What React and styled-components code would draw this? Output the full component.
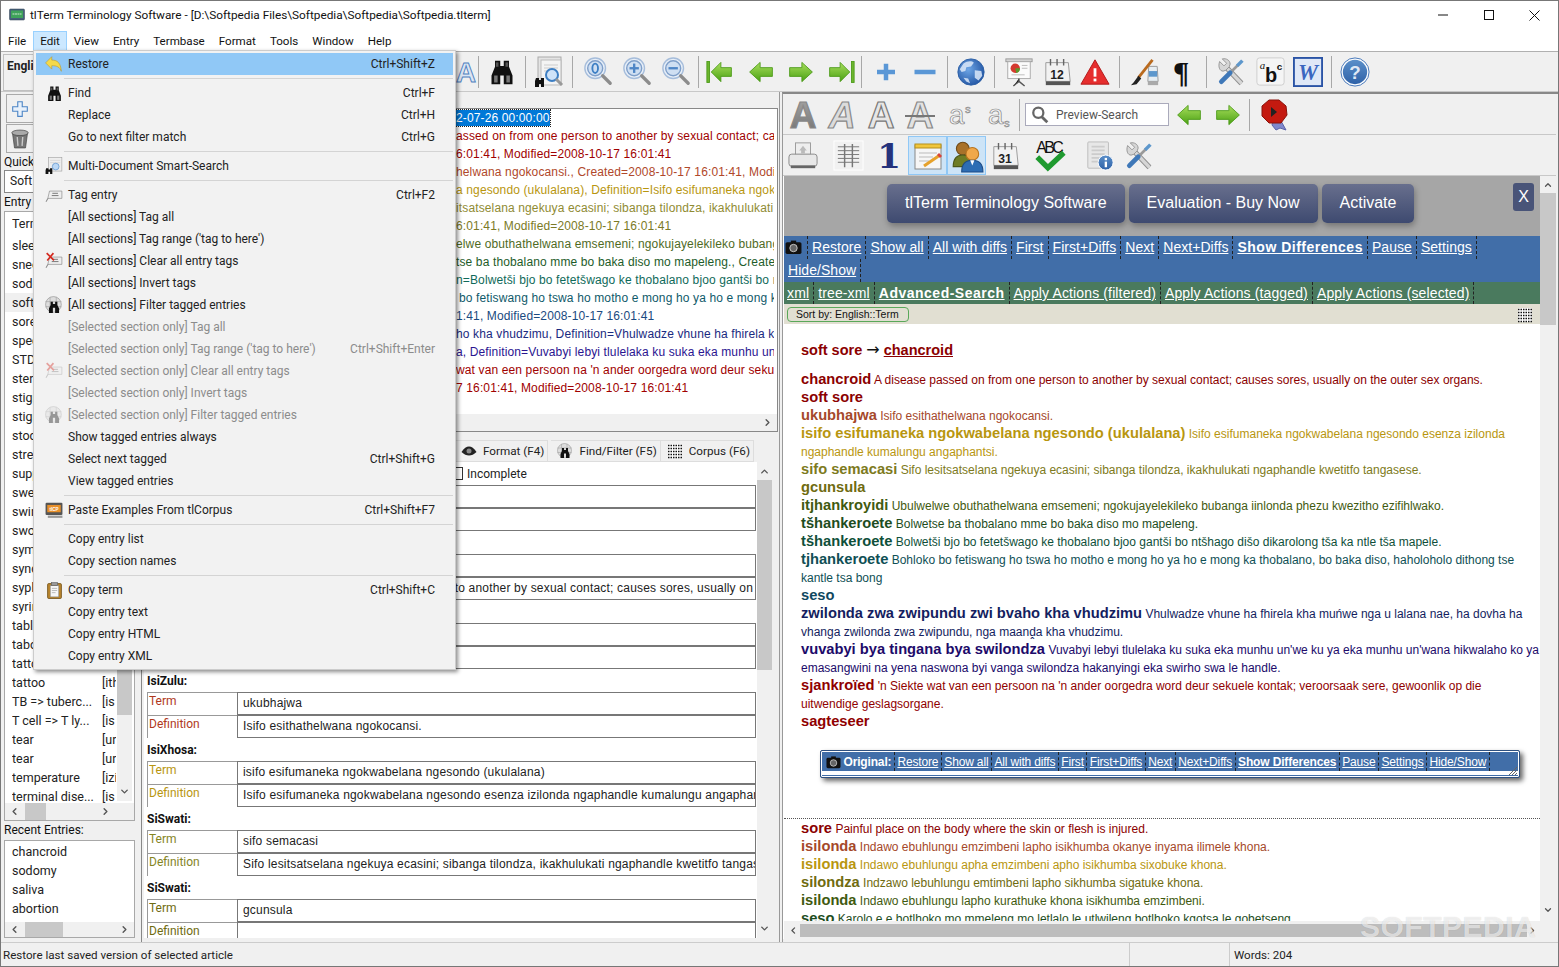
import React from "react";
import styled, { createGlobalStyle } from "styled-components";
import { ChevronUp, ChevronDown, ChevronLeft, ChevronRight } from "lucide-react";

const UI = `Roboto, "Noto Sans", sans-serif`;
const ARIAL = `"Liberation Sans", Arial, sans-serif`;

const Global = createGlobalStyle`
  html, body { margin: 0; padding: 0; overflow: hidden; background: #f0f0f0; }
  * { box-sizing: border-box; }
`;

/* ---------- icons ---------- */
const I = ({ s = 28, children }) => (
  <svg width={s} height={s} viewBox="0 0 32 32">{children}</svg>
);

const Defs = styled.svg`
  width: 0;
  height: 0;
  position: absolute;
`;

const Binoculars = ({ s = 28 }) => (
  <I s={s}>
    <path fill="#111" d="M8 3h6v6h4V3h6v7l4 10v10H18V20h-4v10H4V20l4-10z" />
    <rect x="7" y="20" width="4" height="8" fill="#777" />
    <rect x="21" y="20" width="4" height="8" fill="#777" />
    <rect x="9" y="5" width="3" height="5" fill="#555" />
    <rect x="20" y="5" width="3" height="5" fill="#555" />
  </I>
);
const DocSearch = ({ s = 32 }) => (
  <I s={s}>
    <rect x="5" y="1" width="23" height="27" fill="#e4e4e4" stroke="#aaa" />
    <rect x="8" y="4" width="20" height="25" fill="#f4f4f4" stroke="#bbb" />
    <path stroke="#ccc" d="M11 9h14M11 12h14M11 15h6" />
    <circle cx="19" cy="19" r="6" fill="#cfe3f8" stroke="#3d7fc4" strokeWidth="2" />
    <path stroke="#999" strokeWidth="3" d="M23 23l6 6" />
    <path fill="#111" d="M3 22h3v2h2v-2h3v9H8v-3H6v3H2v-6z" />
  </I>
);
const Zoom = ({ k }) => (
  <I s={30}>
    <circle cx="13" cy="12" r="11" fill="#e8eff8" stroke="#a6bddb" strokeWidth="1.5" />
    <circle cx="13" cy="12" r="8" fill="#cfdff2" stroke="#7f9fc9" strokeWidth="1.5" />
    {k === "0" && <ellipse cx="13" cy="12" rx="3" ry="5" fill="none" stroke="#3d7fc4" strokeWidth="2" />}
    {k !== "0" && <path stroke="#4f86c6" strokeWidth="2.5" d="M8 12h10" />}
    {k === "+" && <path stroke="#4f86c6" strokeWidth="2.5" d="M13 7v10" />}
    <path stroke="#8c8c8c" strokeWidth="3.5" strokeLinecap="round" d="M21 20l8 8" />
  </I>
);
const Arrow = ({ dir = "l", bar, s = 28 }) => (
  <I s={s}>
    <g transform={dir === "r" ? "translate(32 0) scale(-1 1)" : undefined}>
      <path fill="url(#gGreen)" stroke="#4b9a18" d={bar ? "M6 16 17 5v6h12v10H17v6z" : "M3 16 15 5v6h14v10H15v6z"} />
      {bar && <rect x="1" y="4" width="3" height="24" fill="#6cb52d" stroke="#4b9a18" />}
    </g>
  </I>
);
const Plus = ({ s = 24, c = "#5a97d6" }) => (
  <I s={s}>
    <path fill={c} d="M13 5h6v8h9v6h-9v8h-6v-8H4v-6h9z" />
  </I>
);
const PlusOutline = () => (
  <I s={18}>
    <path fill="#e8f1fb" stroke="#4f86c6" strokeWidth="2" d="M12 3h8v9h9v8h-9v9h-8v-9H3v-8h9z" />
  </I>
);
const Minus = () => (
  <I s={24}>
    <rect x="2" y="13" width="28" height="6" fill="#5a97d6" />
  </I>
);
const Globe = () => (
  <I s={30}>
    <circle cx="16" cy="16" r="14" fill="url(#gGlobe)" stroke="#2c5fa5" />
    <path fill="#dce9f9" opacity=".85" d="M8 7c4-3 9-3 11-1l-3 4-5 1-1 4-4 1-2-3zM20 14l7 1 1 5-4 5-4-3zM8 22l5 1 2 5-4-2z" />
  </I>
);
const Board = () => (
  <I s={30}>
    <rect x="2" y="2" width="28" height="3" fill="#d5d5d5" stroke="#999" />
    <rect x="4" y="5" width="24" height="18" fill="#fbfbfb" stroke="#aaa" />
    <circle cx="12" cy="12" r="5" fill="#d43a2f" />
    <path fill="#5a9a2c" d="M12 12h5a5 5 0 0 1-4 5z" />
    <path stroke="#bbb" d="M19 9h6M19 12h6M8 19h14" />
    <path stroke="#555" strokeWidth="1.5" d="M16 23v3l-6 5M16 26l6 5" />
  </I>
);
const Calendar = ({ n = "12" }) => (
  <I s={30}>
    <path fill="#f2f2f2" stroke="#999" d="M3 6h24l2 20H3z" />
    <rect x="3" y="26" width="26" height="4" fill="#555" />
    <path stroke="#666" strokeWidth="1.5" d="M8 2v7M15 2v7M22 2v7" />
    <text x="15" y="23" textAnchor="middle" fontFamily={ARIAL} fontWeight="700" fontSize="13" fill="#222">{n}</text>
  </I>
);
const Warning = () => (
  <I s={30}>
    <path fill="#e62e2e" stroke="#b01818" d="M16 3 31 29H1z" />
    <rect x="14.5" y="12" width="3" height="9" fill="#fff" />
    <rect x="14.5" y="23" width="3" height="3" fill="#fff" />
  </I>
);
const Brush = () => (
  <I s={30}>
    <path fill="#e6edf2" stroke="#999" d="M20 10h9l1 16h-11z" />
    <rect x="19" y="26" width="11" height="4" fill="#aaa" />
    <rect x="20" y="15" width="9" height="6" fill="#5d97cc" />
    <path stroke="#b96a1e" strokeWidth="3" d="M24 3 9 22" />
    <path fill="#222" d="M9 20l3 3-5 6-6 1 3-3z" />
  </I>
);
const Tools = ({ s = 28 }) => (
  <I s={s}>
    <path stroke="#8f8f8f" strokeWidth="6" d="M9 9l19 20" />
    <path stroke="#d6d6d6" strokeWidth="4" d="M9 9l19 20" />
    <path fill="#d6d6d6" stroke="#8f8f8f" d="M3 4l5 5 3-3-5-5c5-1 9 2 9 6l-1 3-4 4-3 1c-4 0-6-5-4-11z" />
    <path stroke="#9a9a9a" strokeWidth="3" d="M14 18l10-10" />
    <path stroke="#3f78b8" strokeWidth="5.5" strokeLinecap="round" d="M5 27l10-10" />
    <path stroke="#5d97cc" strokeWidth="4" d="M23 9l6-6" />
  </I>
);
const AbcTile = () => (
  <I s={29}>
    <rect x="1" y="1" width="30" height="30" rx="3" fill="#f5f5f5" stroke="#ccc" />
    <text x="4" y="13" fontFamily={`"Liberation Serif", serif`} fontStyle="italic" fontSize="12" fill="#111">a</text>
    <text x="10" y="28" fontFamily={ARIAL} fontWeight="700" fontSize="22" fill="#111">b</text>
    <text x="23" y="14" fontFamily={ARIAL} fontWeight="700" fontSize="11" fill="#111">c</text>
  </I>
);
const WordTile = () => (
  <I s={30}>
    <rect x="1" y="1" width="30" height="30" fill="#dfe8f7" stroke="#2a53a5" strokeWidth="2" />
    <text x="16" y="25" textAnchor="middle" fontFamily={`"Liberation Serif", serif`} fontWeight="700" fontStyle="italic" fontSize="24" fill="#3a66c0">W</text>
  </I>
);
const Help = () => (
  <I s={30}>
    <circle cx="16" cy="16" r="15" fill="#fff" stroke="#3d70b5" />
    <circle cx="16" cy="16" r="13" fill="url(#gBlue)" />
    <text x="16" y="23" textAnchor="middle" fontFamily={ARIAL} fontWeight="700" fontSize="20" fill="#dfe8f5">?</text>
  </I>
);
const letterLook = {
  bold: { fill: "url(#gGrey)", stroke: "#888" },
  italic: { fill: "#dcdcdc", stroke: "#888" },
  outline: { fill: "#e6e6e6", stroke: "#777" },
  strike: { fill: "#e2e2e2", stroke: "#888" },
  blue: { fill: "#dbe6f3", stroke: "#4f7fc0" },
};
const LetterA = ({ kind }) => (
  <I s={32}>
    <text
      x="16"
      y="29"
      textAnchor="middle"
      fontFamily={ARIAL}
      fontWeight="700"
      fontStyle={kind === "italic" ? "italic" : "normal"}
      fontSize="37"
      fill={letterLook[kind].fill}
      stroke={letterLook[kind].stroke}
      strokeWidth="1.2"
    >
      A
    </text>
    {kind === "strike" && <rect x="1" y="16" width="30" height="2" fill="#777" />}
  </I>
);
const SmallA = ({ up }) => (
  <I s={26}>
    <text x="13" y="27" textAnchor="middle" fontFamily={ARIAL} fontSize="34" fill="#f4f4f4" stroke="#888" strokeWidth=".9">a</text>
    <text x="27" y={up ? 13 : 31} textAnchor="middle" fontFamily={ARIAL} fontSize="14" fill="#f4f4f4" stroke="#888" strokeWidth=".7">s</text>
  </I>
);
const Printer = () => (
  <I s={30}>
    <rect x="8" y="2" width="16" height="13" fill="#eee" stroke="#999" />
    <path fill="#bbb" d="M12 10l4-5 4 5h-2v3h-4v-3z" />
    <rect x="1" y="14" width="30" height="13" rx="3" fill="#e8e8e8" stroke="#888" />
    <rect x="3" y="26" width="26" height="3" fill="#666" />
  </I>
);
const TableIcon = () => (
  <I s={31}>
    <rect x="1" y="1" width="30" height="30" fill="#f1f1f1" stroke="#fff" />
    <path stroke="#777" d="M5 7h22M5 11h22M5 15h22M5 19h22M5 23h22" />
    <path stroke="#777" strokeWidth="1.5" d="M12 4v24M20 4v24" />
  </I>
);
const Notepad = () => (
  <I s={32}>
    <rect x="3" y="5" width="26" height="24" fill="#f6f6f6" stroke="#888" />
    <rect x="3" y="4" width="26" height="4" fill="#f0c63c" stroke="#b58f1f" />
    <path stroke="#bbb" d="M7 13h18M7 17h14M7 21h10" />
    <path stroke="#e6a12a" strokeWidth="3" d="M12 26l16-11" />
    <path fill="#d8443a" d="M27 13l3 3-2 2-3-3z" />
  </I>
);
const People = () => (
  <I s={34}>
    <circle cx="12" cy="9" r="6" fill="#a8722a" stroke="#6e4a1a" />
    <path fill="#6f7d25" stroke="#4d5818" d="M3 26c0-8 4-11 9-11s9 3 9 11z" />
    <circle cx="21" cy="14" r="6" fill="#f0a84a" stroke="#b8741f" />
    <path fill="#2d6db4" stroke="#1d4b85" d="M11 31c0-8 4-11 10-11s10 3 10 11z" />
    <path fill="#fff" d="M19 20h4l-2 5z" />
  </I>
);
const AbcCheck = () => (
  <I s={34}>
    <text x="16" y="13" textAnchor="middle" fontFamily={ARIAL} fontSize="15" fill="#111" textLength="26">ABC</text>
    <path fill="none" stroke="#1f9a2f" strokeWidth="5" d="M4 17l10 10L29 13" />
  </I>
);
const DocInfo = () => (
  <I s={30}>
    <rect x="3" y="1" width="22" height="28" rx="1" fill="#e7e7e7" stroke="#bbb" />
    <path stroke="#ccc" strokeWidth="2" d="M7 6h14M7 10h14M7 14h14M7 18h8M7 22h8" />
    <circle cx="22" cy="23" r="8" fill="url(#gBlue)" stroke="#fff" />
    <rect x="21" y="22" width="2.5" height="6" fill="#fff" />
    <rect x="21" y="18" width="2.5" height="2.5" fill="#fff" />
  </I>
);
const Seal = () => (
  <I s={32}>
    <path fill="#7f88cc" stroke="#5a62a8" d="M15 21l8 1 5 9-6-2-4 2-4-5z" />
    <path fill="#c41a10" stroke="#8a120a" d="M11 1h10l7 6 1 9-6 8H11l-7-7V7z" />
    <path fill="#222" d="M13 8l6 5-6 5z" />
  </I>
);
const Magnifier = () => (
  <I s={18}>
    <circle cx="13" cy="12" r="9" fill="none" stroke="#666" strokeWidth="4" />
    <path stroke="#666" strokeWidth="5" d="M19 19l10 10" />
  </I>
);
const Camera = ({ s = 17 }) => (
  <I s={s}>
    <rect x="1" y="6" width="30" height="22" rx="3" fill="#111" />
    <rect x="11" y="3" width="10" height="5" fill="#111" />
    <circle cx="16" cy="17" r="7" fill="#666" stroke="#ddd" strokeWidth="1.5" />
  </I>
);
const Trash = () => (
  <I s={22}>
    <path fill="#777" stroke="#444" d="M5 7h22l-3 22H8z" />
    <ellipse cx="16" cy="7" rx="12" ry="4" fill="#aaa" stroke="#444" />
    <path stroke="#ccc" strokeWidth="2" d="M12 13l1 13M20 13l-1 13" />
  </I>
);
const RestoreIcon = () => (
  <I s={18}>
    <path fill="#f4d94a" stroke="#b8952a" d="M12 3v6c10 0 16 5 17 20-3-8-8-10-17-10v6L1 14z" />
  </I>
);
const TagIcon = ({ x }) => (
  <I s={18}>
    <path fill="#eee" stroke="#777" d="M8 9h22v13H5z" />
    <path stroke="#666" strokeWidth="1.5" d="M13 13h10M12 17h12M5 22l-3 6" />
    {x && <path stroke="#d42a20" strokeWidth="3" d="M3 2l13 13M15 2L4 15" />}
  </I>
);
const GlobeBin = ({ s = 18 }) => (
  <I s={s}>
    <circle cx="15" cy="15" r="14" fill="#ddd" stroke="#888" />
    <path stroke="#999" d="M1 10h28M1 19h28M9 2v26M20 2v26" />
    <path fill="#111" d="M10 10h4v4h4v-4h4v6l3 6v8h-7v-9h-4v9H7v-8l3-6z" />
  </I>
);
const MultiDoc = () => (
  <I s={18}>
    <rect x="6" y="1" width="24" height="24" fill="#eee" stroke="#999" />
    <path stroke="#ccc" d="M9 6h18M9 10h18" />
    <circle cx="19" cy="17" r="6" fill="#bcd8f5" stroke="#3d7fc4" />
    <path fill="#111" d="M2 20h4v2h3v-2h4v10H9v-4H6v4H1v-6z" />
  </I>
);
const CorpusIcon = () => (
  <I s={18}>
    <rect x="1" y="3" width="30" height="22" rx="2" fill="#555" />
    <rect x="4" y="7" width="24" height="13" fill="#e8902a" />
    <text x="16" y="17" textAnchor="middle" fontSize="8" fontWeight="700" fontFamily={ARIAL} fill="#fff">tlCP</text>
    <rect x="5" y="26" width="26" height="4" fill="#999" />
  </I>
);
const Clipboard = () => (
  <I s={17}>
    <rect x="3" y="3" width="26" height="28" rx="2" fill="#b8852e" stroke="#6e4c14" strokeWidth="1.5" />
    <rect x="8" y="7" width="16" height="21" fill="#f6f6f6" stroke="#888" />
    <rect x="10" y="1" width="12" height="6" fill="#999" stroke="#555" />
    <path stroke="#888" d="M11 12h10M11 16h10M11 20h7" />
  </I>
);
const Eye = () => (
  <I s={16}>
    <path fill="#222" d="M1 18c5-8 10-11 15-11s10 3 15 11c-5 5-10 7-15 7S6 23 1 18z" />
    <circle cx="16" cy="16" r="5" fill="#888" />
  </I>
);
const GridIcon = () => (
  <I s={16}>
    <rect x="2" y="2" width="28" height="28" fill="#fff" />
    <path stroke="#111" strokeWidth="3" strokeDasharray="3 2" d="M2 5h28M2 11h28M2 17h28M2 23h28M2 29h28" />
  </I>
);
const AppIcon = () => (
  <I s={16}>
    <rect x="1" y="4" width="30" height="22" rx="2" fill="#46617a" stroke="#2e3e50" />
    <rect x="4" y="7" width="24" height="15" fill="#3fa35a" />
    <path stroke="#cfe8d2" strokeWidth="2" d="M7 14h18" strokeDasharray="4 1" />
  </I>
);

/* ---------- window chrome ---------- */
const Window = styled.div`
  width: 1559px;
  height: 967px;
  display: flex;
  flex-direction: column;
  border: 1px solid #777;
  background: #f0f0f0;
  font-family: ${UI};
  font-size: 12px;
  color: #222;
  position: relative;
  overflow: hidden;
`;
const TitleBar = styled.div`
  height: 28px;
  flex: none;
  background: #fff;
  display: flex;
  align-items: center;
  padding: 0 3px 0 8px;
  gap: 5px;
`;
const TitleText = styled.div`
  flex: 1;
  font-size: 11.8px;
  color: #111;
`;
const WinButton = styled.div`
  width: 41px;
  height: 27px;
  display: flex;
  align-items: center;
  justify-content: center;
`;
const MenuBar = styled.div`
  height: 23px;
  flex: none;
  background: #fff;
  display: flex;
  align-items: center;
  padding: 2px 0 0 0;
  border-bottom: 1px solid #b0b0b0;
`;
const MenuTitle = styled.div`
  height: 20px;
  padding: 0 6px;
  line-height: 19px;
  font-size: 11.6px;
  color: #111;
  border: 1px solid ${(p) => (p.$open ? "#99d1ff" : "transparent")};
  background: ${(p) => (p.$open ? "#cce8ff" : "transparent")};
`;
const Toolbar = styled.div`
  height: ${(p) => p.$h || 41}px;
  flex: none;
  display: flex;
  align-items: center;
  background: #f0f0f0;
  border-bottom: 1px solid #c8c8c8;
  padding-top: ${(p) => p.$pt || 0}px;
`;
const Slot = styled.div`
  width: ${(p) => p.$w || 39}px;
  height: 100%;
  flex: none;
  display: flex;
  align-items: center;
  justify-content: center;
  background: ${(p) => (p.$on ? "#cde4f7" : "transparent")};
  outline: ${(p) => (p.$on ? "1px solid #90c8f6" : "none")};
  outline-offset: -1px;
`;
const Pilcrow = styled.span`
  font-family: "Liberation Serif", serif;
  font-weight: 700;
  font-size: 30px;
  color: #111;
`;
const One = styled.span`
  font-family: "DejaVu Serif", serif;
  font-weight: 700;
  font-size: 34px;
  line-height: 34px;
  color: #25327c;
  margin-right: 4px;
`;
const Sep = styled.div`
  width: 1px;
  height: 32px;
  flex: none;
  background: #a8a8a8;
  margin: 0 ${(p) => p.$r || 0}px 0 ${(p) => p.$l || 0}px;
`;
const LangTab = styled.div`
  width: 31px;
  height: 37px;
  margin-left: 2px;
  padding: 4px 0 0 3px;
  align-self: flex-start;
  margin-top: 2px;
  font-weight: 700;
  border: 1px solid #c0c0c0;
  overflow: hidden;
  flex: none;
`;
const Hidden = styled.div`
  width: ${(p) => p.$w}px;
  flex: none;
`;
const Main = styled.div`
  flex: 1;
  min-height: 0;
  display: flex;
`;

/* ---------- left pane ---------- */
const LeftPane = styled.div`
  width: 141px;
  flex: none;
  display: flex;
  flex-direction: column;
  padding: 2px 6px 4px 3px;
  border-right: 1px solid #888;
`;
const SmallBtn = styled.div`
  width: 28px;
  height: 29px;
  border: 1px solid #aaa;
  margin-bottom: 1px;
  display: flex;
  align-items: center;
  justify-content: center;
  margin-left: 2px;
`;
const Caption = styled.div`
  height: ${(p) => p.$h || 16}px;
  line-height: ${(p) => p.$h || 16}px;
  flex: none;
  color: #111;
`;
const QuickInput = styled.div`
  height: 23px;
  flex: none;
  border: 1px solid #888;
  background: #fff;
  line-height: 21px;
  padding-left: 5px;
  color: #222;
  overflow: hidden;
`;
const ListBox = styled.div`
  flex: ${(p) => (p.$h ? "none" : 1)};
  height: ${(p) => (p.$h ? `${p.$h}px` : "auto")};
  min-height: 0;
  background: #fff;
  border: 1px solid #a8a8a8;
  position: relative;
  display: flex;
  flex-direction: column;
  padding-top: ${(p) => p.$pt || 0}px;
  overflow: hidden;
`;
const ListRows = styled.div`
  flex: 1;
  min-height: 0;
  overflow: hidden;
`;
const ListRow = styled.div`
  height: 19px;
  line-height: 19px;
  display: flex;
  padding-left: 7px;
  font-size: 12.5px;
  color: #222;
  background: ${(p) => (p.$sel ? "#f0f0f0" : "transparent")};
  white-space: nowrap;
`;
const ListHead = styled(ListRow)`
  height: 20px;
  line-height: 16px;
`;
const ColA = styled.div`
  width: 90px;
  flex: none;
  overflow: hidden;
`;
const ColB = styled.div`
  width: 14px;
  flex: none;
  overflow: hidden;
`;
const VBar = styled.div`
  width: ${(p) => p.$w || 15}px;
  flex: none;
  background: #f0f0f0;
  display: flex;
  flex-direction: column;
  align-items: center;
  position: ${(p) => (p.$over ? "absolute" : "static")};
  right: 2px;
  top: 0;
  bottom: 19px;
  color: #555;
  padding: 4px 0;
`;
const VThumb = styled.div`
  width: 100%;
  height: ${(p) => p.$h}px;
  margin-top: ${(p) => p.$t}px;
  background: #c8c8c8;
  flex: none;
`;
const Grow = styled.div`
  flex: 1;
`;
const BottomGap = styled.div`
  height: 20px;
  flex: none;
`;
const HBar = styled.div`
  height: ${(p) => p.$h || 17}px;
  flex: none;
  display: flex;
  align-items: center;
  background: #f0f0f0;
  padding: 0 ${(p) => p.$pr || 4}px 0 4px;
  color: #555;
`;
const HThumb = styled.div`
  width: ${(p) => p.$w}px;
  height: ${(p) => (p.$th ? `${p.$th}px` : "100%")};
  flex: none;
  margin-left: ${(p) => p.$l}px;
  background: ${(p) => (p.$th ? "#bdbdbd" : "#c8c8c8")};
`;

/* ---------- middle pane ---------- */
const MidPane = styled.div`
  width: 638px;
  flex: none;
  display: flex;
  flex-direction: column;
  padding: 16px 0 4px 2px;
  border-right: 1px solid #999;
`;
const LogBox = styled.div`
  height: 324px;
  flex: none;
  width: 634px;
  border: 1px solid #888;
  background: #fff;
  display: flex;
  flex-direction: column;
  font-family: ${ARIAL};
  overflow: hidden;
`;
const LogLines = styled.div`
  flex: 1;
  padding: 0 3px 0 311px;
  overflow: hidden;
`;
const LogLine = styled.div`
  height: 18px;
  line-height: 18px;
  font-size: 12px;
  letter-spacing: 0.13px;
  white-space: nowrap;
  overflow: hidden;
  padding-left: ${(p) => p.$in || 0}px;
  color: ${(p) => p.$c};
`;
const Selected = styled.span`
  display: inline-block;
  height: 16px;
  line-height: 16px;
  background: #0078d7;
  color: #fff;
  outline: 1px dotted #222;
`;
const Tabs = styled.div`
  height: 22px;
  margin-top: 8px;
  flex: none;
  display: flex;
  justify-content: flex-end;
  width: 610px;
  border-bottom: 1px solid #ddd;
`;
const Tab = styled.div`
  height: 22px;
  padding: 0 3px 2px 6px;
  display: flex;
  align-items: center;
  gap: 6px;
  border: 1px solid #ddd;
  border-bottom: 0;
  border-left: 0;
  color: #222;
  font-size: 11.7px;
  margin-right: ${(p) => p.$mr || 0}px;
`;
const FormWrap = styled.div`
  flex: 1;
  min-height: 0;
  width: 628px;
  display: flex;
  background: #fff;
`;
const Form = styled.div`
  flex: 1;
  min-width: 0;
  overflow: hidden;
  padding-left: 3px;
`;
const CheckRow = styled.div`
  height: 23px;
  display: flex;
  align-items: center;
  gap: 4px;
  padding-left: 307px;
  color: #222;
`;
const CheckBox = styled.div`
  width: 9px;
  height: 13px;
  border: 1px solid #333;
  border-left: 0;
`;
const GroupHead = styled.div`
  height: 23px;
  line-height: 25px;
  font-weight: 700;
  color: #111;
  font-size: 12px;
`;
const FieldRow = styled.div`
  height: 23px;
  display: flex;
`;
const FieldName = styled.div`
  width: 90px;
  flex: none;
  border-left: 1px solid #999;
  border-top: 1px solid #999;
  padding: 0 0 0 1px;
  line-height: 16px;
  color: ${(p) => p.$c};
`;
const FieldValue = styled.div`
  width: 519px;
  flex: none;
  border: 1px solid #777;
  background: #fff;
  padding-left: 5px;
  line-height: 21px;
  font-family: ${ARIAL};
  font-size: 12px;
  letter-spacing: 0.19px;
  color: #222;
  white-space: nowrap;
  overflow: hidden;
`;

/* ---------- right pane ---------- */
const RightPane = styled.div`
  flex: 1;
  min-width: 0;
  display: flex;
  flex-direction: column;
  border-top: 2px solid #888;
  border-left: 1px solid #999;
  margin-left: 2px;
  padding: 0 2px 3px 0;
`;
const SearchBox = styled.div`
  width: 144px;
  height: 23px;
  flex: none;
  border: 1px solid #aab;
  background: #fff;
  display: flex;
  align-items: center;
  gap: 7px;
  padding-left: 5px;
  color: #555;
`;
const Preview = styled.div`
  flex: 1;
  min-height: 0;
  display: flex;
  position: relative;
`;
const Web = styled.div`
  flex: 1;
  min-width: 0;
  background: #fff;
  font-family: ${ARIAL};
  overflow: hidden;
  display: flex;
  flex-direction: column;
  border-left: 1px solid #fff;
`;
const Banner = styled.div`
  height: 60px;
  flex: none;
  background: #a6a6a6;
  display: flex;
  gap: 4px;
  padding: 8px 0 0 103px;
`;
const BannerBtn = styled.div`
  height: 39px;
  padding: 0 18px;
  line-height: 38px;
  border-radius: 5px;
  color: #fff;
  font-size: 16px;
  background: linear-gradient(#686f8d, #3e4a70);
  box-shadow: 1px 3px 6px rgba(0, 0, 0, 0.3);
`;
const CloseBtn = styled.div`
  position: absolute;
  top: 7px;
  right: 22px;
  width: 21px;
  height: 28px;
  line-height: 27px;
  text-align: center;
  border-radius: 3px;
  color: #fff;
  font-size: 16px;
  background: #495478;
`;
const LinkBar = styled.div`
  flex: none;
  display: flex;
  flex-wrap: wrap;
  background: ${(p) => p.$c};
  letter-spacing: ${(p) => p.$ls}px;
`;
const LinkCell = styled.div`
  height: ${(p) => p.$h || 23}px;
  line-height: ${(p) => p.$h || 23}px;
  padding: 0 ${(p) => (p.$icon ? "5px 0 1px" : "4px")};
  font-size: 14px;
  border-right: 1px dashed #222;
  color: #fff;
  white-space: nowrap;
  &:first-child:not(:only-child) {
    padding-left: ${(p) => (p.$icon ? 1 : 3)}px;
  }
`;
const LinkText = styled.a`
  color: #fff;
  text-decoration: underline;
  font-weight: ${(p) => (p.$b ? 700 : 400)};
  letter-spacing: ${(p) => (p.$b ? "0.5px" : "inherit")};
`;
const CamWrap = styled.span`
  display: inline-block;
  vertical-align: -4px;
  margin-right: ${(p) => p.$gap || 0}px;
`;
const SortBar = styled.div`
  height: 20px;
  flex: none;
  background: #e1dfd2;
  display: flex;
  justify-content: space-between;
  padding: 3px 8px 0 3px;
`;
const SortBtn = styled.div`
  width: 122px;
  height: 15px;
  border: 1px solid #5aa85a;
  border-radius: 4px;
  font-size: 10.5px;
  line-height: 13px;
  padding-left: 8px;
  color: #111;
`;
const Article = styled.div`
  flex: none;
  padding: 15px 0 0 17px;
  height: 494px;
`;
const Heading = styled.div`
  height: 22px;
  line-height: 22px;
  font-size: 14.5px;
  font-weight: 700;
  color: #8b0000;
  margin-bottom: 10px;
  & a {
    color: #8b0000;
    text-decoration: underline;
  }
`;
const HeadArrow = styled.span`
  font-family: "DejaVu Sans", sans-serif;
  font-size: 16px;
  line-height: 0;
  color: #111;
  font-weight: 400;
`;
const Entry = styled.div`
  line-height: 18px;
  font-size: 12px;
  color: ${(p) => p.$c};
  & b {
    font-size: 14.7px;
    line-height: 0;
  }
`;
const FloatBar = styled.div`
  width: 700px;
  height: 28px;
  margin: 19px 0 0 19px;
  background: #416ea8;
  border: 1px solid #2e5080;
  outline: 1px solid #fff;
  outline-offset: -2px;
  box-shadow: 3px 3px 5px rgba(0, 0, 0, 0.6);
  border-radius: 2px;
  display: flex;
  padding: 1px 0 0 2px;
  position: relative;
  color: #fff;
`;
const FloatCell = styled.div`
  height: 19px;
  line-height: 20px;
  padding: 0 2.5px;
  font-size: 12px;
  letter-spacing: -0.16px;
  border-right: 1px dashed #222;
  white-space: nowrap;
  font-weight: ${(p) => (p.$b ? 700 : 400)};
  & a {
    letter-spacing: inherit;
  }
`;
const FloatStrip = styled.div`
  position: absolute;
  left: 1px;
  right: 1px;
  bottom: 2px;
  height: 4px;
  background: #fff;
`;
const Grip = styled.svg`
  position: absolute;
  right: 2px;
  bottom: 2px;
  width: 9px;
  height: 9px;
`;
const Below = styled.div`
  flex: 1;
  min-height: 0;
  overflow: hidden;
  border-top: 1px dotted #555;
  padding: 1px 0 0 17px;
`;
const Watermark = styled.div`
  position: absolute;
  left: 577px;
  bottom: -5px;
  font-family: ${ARIAL};
  font-weight: 700;
  font-size: 30px;
  letter-spacing: 0.5px;
  color: rgba(255, 255, 255, 0.65);
  text-shadow: 0 0 1px rgba(0, 0, 0, 0.18);
  pointer-events: none;
`;
const GridMark = styled.div`
  width: 15px;
  height: 15px;
`;
const StatusBar = styled.div`
  height: 24px;
  flex: none;
  display: flex;
  align-items: center;
  border-top: 1px solid #ccc;
  padding-left: 2px;
`;
const StatusCell = styled.div`
  height: 100%;
  line-height: 24px;
  font-size: 11.6px;
  width: ${(p) => p.$w}px;
  flex: ${(p) => (p.$w ? "none" : 1)};
  padding-left: ${(p) => (p.$w ? 4 : 0)}px;
  border-left: ${(p) => (p.$w ? "1px solid #ccc" : "0")};
  color: #222;
`;

/* ---------- edit menu ---------- */
const Menu = styled.div`
  position: absolute;
  left: 32px;
  top: 49px;
  width: 423px;
  height: 620px;
  background: #f2f2f2;
  border: 1px solid #ccc;
  box-shadow: 2px 2px 4px rgba(0, 0, 0, 0.45);
  padding: 2px;
  z-index: 5;
`;
const MenuRow = styled.div`
  height: 22px;
  display: flex;
  align-items: center;
  padding-right: 18px;
  background: ${(p) => (p.$hot ? "#90c8f6" : "transparent")};
  color: ${(p) => (p.$off ? "#8c8c8c" : "#222")};
`;
const MenuIcon = styled.div`
  width: 32px;
  flex: none;
  display: flex;
  justify-content: center;
  padding-left: 4px;
  opacity: ${(p) => (p.$off ? 0.4 : 1)};
`;
const MenuLabel = styled.div`
  flex: 1;
  white-space: nowrap;
`;
const MenuSep = styled.div`
  height: 7px;
  margin-left: 28px;
  display: flex;
  align-items: center;
  &::after {
    content: "";
    flex: 1;
    height: 1px;
    background: #d4d4d4;
  }
`;

/* ---------- data ---------- */
const menuNames = ["File", "Edit", "View", "Entry", "Termbase", "Format", "Tools", "Window", "Help"];

const menuItems = [
  { t: "Restore", k: "Ctrl+Shift+Z", i: <RestoreIcon />, hot: true },
  "-",
  { t: "Find", k: "Ctrl+F", i: <Binoculars s={17} /> },
  { t: "Replace", k: "Ctrl+H" },
  { t: "Go to next filter match", k: "Ctrl+G" },
  "-",
  { t: "Multi-Document Smart-Search", i: <MultiDoc /> },
  "-",
  { t: "Tag entry", k: "Ctrl+F2", i: <TagIcon /> },
  { t: "[All sections] Tag all" },
  { t: "[All sections] Tag range ('tag to here')" },
  { t: "[All sections] Clear all entry tags", i: <TagIcon x /> },
  { t: "[All sections] Invert tags" },
  { t: "[All sections] Filter tagged entries", i: <GlobeBin /> },
  { t: "[Selected section only] Tag all", off: true },
  { t: "[Selected section only] Tag range ('tag to here')", k: "Ctrl+Shift+Enter", off: true },
  { t: "[Selected section only] Clear all entry tags", i: <TagIcon x />, off: true },
  { t: "[Selected section only] Invert tags", off: true },
  { t: "[Selected section only] Filter tagged entries", i: <GlobeBin />, off: true },
  { t: "Show tagged entries always" },
  { t: "Select next tagged", k: "Ctrl+Shift+G" },
  { t: "View tagged entries" },
  "-",
  { t: "Paste Examples From tlCorpus", k: "Ctrl+Shift+F7", i: <CorpusIcon /> },
  "-",
  { t: "Copy entry list" },
  { t: "Copy section names" },
  "-",
  { t: "Copy term", k: "Ctrl+Shift+C", i: <Clipboard /> },
  { t: "Copy entry text" },
  { t: "Copy entry HTML" },
  { t: "Copy entry XML" },
];

const entryRows = [
  ["sleep", "[u"], ["sneeze", "[u"], ["sodomy", "[u"], ["soft sore", "[u", true], ["sore", "[u"],
  ["speculum", "[u"], ["STD", "[u"], ["sterile", "[u"], ["stigma", "[u"], ["stigmatize", "[u"],
  ["stock", "[u"], ["stress", "[u"], ["support", "[u"], ["sweat", "[u"], ["swine flu", "[u"],
  ["swollen", "[u"], ["symptom", "[u"], ["syndrome", "[u"], ["syphilis", "[u"], ["syringe", "[u"],
  ["tablet", "[u"], ["taboo", "[u"], ["tattoo", "[u"], ["tattoo", "[ith"], ["TB => tuberc...", "[is"],
  ["T cell => T ly...", "[is"], ["tear", "[ur"], ["tear", "[ur"], ["temperature", "[izi"], ["terminal dise...", "[is"],
];

const logLines = [
  { c: "#a00000", t: "assed on from one person to another by sexual contact; causes sores, usually" },
  { c: "#a00000", in: 0, t: "6:01:41, Modified=2008-10-17 16:01:41" },
  { c: "#b0482a", t: "helwana ngokocansi., Created=2008-10-17 16:01:41, Modified=2008" },
  { c: "#b8960f", t: "a ngesondo (ukulalana), Definition=Isifo esifumaneka ngokwabelana" },
  { c: "#8f8b33", t: "itsatselana ngekuya ecasini; sibanga tilondza, ikakhulukati ngaphandle" },
  { c: "#7b7a26", t: "6:01:41, Modified=2008-10-17 16:01:41" },
  { c: "#4f6b1f", t: "elwe obuthathelwana emsemeni; ngokujayelekileko bubanga iinlonda" },
  { c: "#1e5c2a", t: "tse ba thobalano mme bo baka diso mo mapeleng., Created=2008" },
  { c: "#0f6a5a", t: "n=Bolwetši bjo bo fetetšwago ke thobalano bjoo gantši bo ntšhago" },
  { c: "#0f5a6a", in: 3, t: "bo fetiswang ho tswa ho motho e mong ho ya ho e mong ka thobalano" },
  { c: "#1a4a80", t: "1:41, Modified=2008-10-17 16:01:41" },
  { c: "#1a2a80", t: "ho kha vhudzimu, Definition=Vhulwadze vhune ha fhirela kha muńwe" },
  { c: "#2a1490", t: "a, Definition=Vuvabyi lebyi tlulelaka ku suka eka munhu un'we ku ya" },
  { c: "#a00000", t: "wat van een persoon na 'n ander oorgedra word deur sekuele kontak" },
  { c: "#a00000", t: "7 16:01:41, Modified=2008-10-17 16:01:41" },
];

const groups = [
  { h: "", c: "#8b0000", a: "", b: "" },
  { h: "English:", c: "#8b0000", a: "chancroid", b: "A disease passed on from one person to another by sexual contact; causes sores, usually on the outer sex organs." },
  { h: "English:", c: "#8b0000", a: "soft sore", b: "" },
  { h: "IsiZulu:", c: "#b0381c", a: "ukubhajwa", b: "Isifo esithathelwana ngokocansi." },
  { h: "IsiXhosa:", c: "#b8960f", a: "isifo esifumaneka ngokwabelana ngesondo (ukulalana)", b: "Isifo esifumaneka ngokwabelana ngesondo esenza izilonda ngaphandle kumalungu angaphantsi." },
  { h: "SiSwati:", c: "#85851f", a: "sifo semacasi", b: "Sifo lesitsatselana ngekuya ecasini; sibanga tilondza, ikakhulukati ngaphandle kwetitfo tangasese." },
  { h: "SiSwati:", c: "#6f6b10", a: "gcunsula", b: "" },
];

const blueLinks = ["Restore", "Show all", "All with diffs", "First", "First+Diffs", "Next", "Next+Diffs", "Show Differences", "Pause", "Settings", "Hide/Show"];
const greenLinks = ["xml", "tree-xml", "Advanced-Search", "Apply Actions (filtered)", "Apply Actions (tagged)", "Apply Actions (selected)"];
const isBold = (t) => t === "Show Differences" || t === "Advanced-Search";

const articleEntries = [
  ["#8b0000", "chancroid", "A disease passed on from one person to another by sexual contact; causes sores, usually on the outer sex organs."],
  ["#8b0000", "soft sore", ""],
  ["#a5482a", "ukubhajwa", "Isifo esithathelwana ngokocansi."],
  ["#b8960f", "isifo esifumaneka ngokwabelana ngesondo (ukulalana)", "Isifo esifumaneka ngokwabelana ngesondo esenza izilonda ngaphandle kumalungu angaphantsi."],
  ["#7d7a20", "sifo semacasi", "Sifo lesitsatselana ngekuya ecasini; sibanga tilondza, ikakhulukati ngaphandle kwetitfo tangasese."],
  ["#6f6b10", "gcunsula", ""],
  ["#3f5a10", "itjhankroyidi", "Ubulwelwe obuthathelwana emsemeni; ngokujayelekileko bubanga iinlonda phezu kwezitho ezifihlwako."],
  ["#1e4d1e", "tšhankeroete", "Bolwetse ba thobalano mme bo baka diso mo mapeleng."],
  ["#0f4f3a", "tšhankeroete", "Bolwetši bjo bo fetetšwago ke thobalano bjoo gantši bo ntšhago dišo dikarolong tša ka ntle tša mapele."],
  ["#0f4f55", "tjhankeroete", "Bohloko bo fetiswang ho tswa ho motho e mong ho ya ho e mong ka thobalano, bo baka diso, haholoholo dithong tse kantle tsa bong"],
  ["#104860", "seso", ""],
  ["#141e60", "zwilonda zwa zwipundu zwi bvaho kha vhudzimu", "Vhulwadze vhune ha fhirela kha muńwe nga u lalana nae, ha dovha ha vhanga zwilonda zwa zwipundu, nga maanḓa kha vhudzimu."],
  ["#200a6a", "vuvabyi bya tingana bya swilondza", "Vuvabyi lebyi tlulelaka ku suka eka munhu un'we ku ya eka munhu un'wana hikwalaho ko ya emasangwini na yena naswona byi vanga swilondza hakanyingi eka swirho swa le handle."],
  ["#900000", "sjankroïed", "'n Siekte wat van een persoon na 'n ander oorgedra word deur sekuele kontak; veroorsaak sere, gewoonlik op die uitwendige geslagsorgane."],
  ["#900000", "sagteseer", ""],
];

const belowEntries = [
  ["#8b0000", "sore", "Painful place on the body where the skin or flesh is injured."],
  ["#a5482a", "isilonda", "Indawo ebuhlungu emzimbeni lapho isikhumba okanye inyama ilimele khona."],
  ["#b8960f", "isilonda", "Indawo ebuhlungu apha emzimbeni apho isikhumba sixobuke khona."],
  ["#6f6b10", "silondza", "Indzawo lebuhlungu emtimbeni lapho sikhumba sigatuke khona."],
  ["#3f5a10", "isilonda", "Indawo ebuhlungu lapho kurathuke khona isikhumba emzimbeni."],
  ["#1e4d1e", "seso", "Karolo e e botlhoko mo mmeleng mo letlalo le utlwileng botlhoko kgotsa le gobetseng."],
];

const EntryLine = ({ e }) => (
  <Entry $c={e[0]}>
    <b>{e[1]}</b> {e[2]}
  </Entry>
);

export default function App() {
  return (
    <Window>
      <Global />
      <Defs>
        <defs>
          <linearGradient id="gGreen" x1="0" y1="0" x2="0" y2="1">
            <stop offset="0" stopColor="#a8de5c" />
            <stop offset="1" stopColor="#4aa114" />
          </linearGradient>
          <linearGradient id="gGrey" x1="0" y1="0" x2="0" y2="1">
            <stop offset="0" stopColor="#a8a8a8" />
            <stop offset="1" stopColor="#707070" />
          </linearGradient>
          <linearGradient id="gBlue" x1="0" y1="0" x2="0" y2="1">
            <stop offset="0" stopColor="#5b8fc9" />
            <stop offset="1" stopColor="#2f62a8" />
          </linearGradient>
          <radialGradient id="gGlobe" cx=".4" cy=".4" r=".7">
            <stop offset="0" stopColor="#6ea6e6" />
            <stop offset="1" stopColor="#1d4f9e" />
          </radialGradient>
        </defs>
      </Defs>

      <TitleBar>
        <AppIcon />
        <TitleText>tlTerm Terminology Software - [D:\Softpedia Files\Softpedia\Softpedia\Softpedia.tlterm]</TitleText>
        <WinButton>
          <svg width="10" height="10"><path d="M0 5h10" stroke="#111" /></svg>
        </WinButton>
        <WinButton>
          <svg width="10" height="10"><rect x=".5" y=".5" width="9" height="9" fill="none" stroke="#111" /></svg>
        </WinButton>
        <WinButton>
          <svg width="11" height="11"><path d="M.5.5l10 10M10.5.5l-10 10" stroke="#111" /></svg>
        </WinButton>
      </TitleBar>

      <MenuBar>
        {menuNames.map((m) => (
          <MenuTitle key={m} $open={m === "Edit"}>{m}</MenuTitle>
        ))}
      </MenuBar>

      <Toolbar $h={40}>
        <LangTab>Englis</LangTab>
        <Hidden $w={420} />
        <Slot $w={24}><LetterA kind="blue" /></Slot>
        <Sep />
        <Slot $w={46}><Binoculars /></Slot>
        <Sep />
        <Slot $w={46}><DocSearch /></Slot>
        <Sep $r={5} />
        <Slot><Zoom k="0" /></Slot>
        <Slot><Zoom k="+" /></Slot>
        <Slot><Zoom k="-" /></Slot>
        <Sep $l={3} />
        <Slot $w={42}><Arrow bar /></Slot>
        <Slot $w={40}><Arrow /></Slot>
        <Slot $w={39}><Arrow dir="r" /></Slot>
        <Slot $w={41}><Arrow dir="r" bar /></Slot>
        <Sep />
        <Slot $w={48}><Plus /></Slot>
        <Slot $w={30}><Minus /></Slot>
        <Sep $l={7} />
        <Slot $w={46}><Globe /></Slot>
        <Sep />
        <Slot $w={48}><Board /></Slot>
        <Slot $w={30}><Calendar /></Slot>
        <Slot $w={44}><Warning /></Slot>
        <Sep $l={2} />
        <Slot $w={50}><Brush /></Slot>
        <Slot $w={22}><Pilcrow>¶</Pilcrow></Slot>
        <Sep $l={14} />
        <Slot $w={48}><Tools /></Slot>
        <Slot $w={30}><AbcTile /></Slot>
        <Slot $w={46}><WordTile /></Slot>
        <Sep />
        <Slot $w={46}><Help /></Slot>
      </Toolbar>

      <Main>
        <LeftPane>
          <SmallBtn><PlusOutline /></SmallBtn>
          <SmallBtn><Trash /></SmallBtn>
          <Caption>Quick</Caption>
          <QuickInput>Soft</QuickInput>
          <Caption $h={18}>Entry</Caption>
          <ListBox $pt={4}>
            <ListRows>
              <ListHead>
                <ColA>Term</ColA>
              </ListHead>
              {entryRows.map((r, i) => (
                <ListRow key={i} $sel={r[2]}>
                  <ColA>{r[0]}</ColA>
                  <ColB>{r[1]}</ColB>
                </ListRow>
              ))}
            </ListRows>
            <VBar $over>
              <VThumb $t={0} $h={499} />
              <Grow />
              <ChevronDown size={11} strokeWidth={3} />
            </VBar>
            <HBar>
              <ChevronLeft size={11} strokeWidth={3} />
              <HThumb $l={5} $w={21} />
              <Grow />
              <ChevronRight size={11} strokeWidth={3} />
              <Hidden $w={19} />
            </HBar>
          </ListBox>
          <Caption $h={19}>Recent Entries:</Caption>
          <ListBox $h={98} $pt={1}>
            <ListRows>
              {["chancroid", "sodomy", "saliva", "abortion"].map((r) => (
                <ListRow key={r}>{r}</ListRow>
              ))}
            </ListRows>
            <HBar $h={15}>
              <ChevronLeft size={11} strokeWidth={3} />
              <HThumb $l={5} $w={38} />
              <Grow />
              <ChevronRight size={11} strokeWidth={3} />
            </HBar>
          </ListBox>
        </LeftPane>

        <MidPane>
          <LogBox>
            <LogLines>
              <LogLine $c="#222"><Selected>2-07-26 00:00:00</Selected></LogLine>
              {logLines.map((l, i) => (
                <LogLine key={i} $c={l.c} $in={l.in}>{l.t}</LogLine>
              ))}
            </LogLines>
            <HBar $h={17} $pr={4}>
              <Grow />
              <ChevronRight size={11} strokeWidth={3} />
            </HBar>
          </LogBox>
          <Tabs>
            <Tab $mr={3}><Eye />Format (F4)</Tab>
            <Tab><GlobeBin s={16} />Find/Filter (F5)</Tab>
            <Tab><GridIcon />Corpus (F6)</Tab>
          </Tabs>
          <FormWrap>
            <Form>
              <CheckRow><CheckBox />Incomplete</CheckRow>
              {groups.map((g, i) => (
                <div key={i}>
                  {i > 0 && <GroupHead>{g.h}</GroupHead>}
                  <FieldRow>
                    <FieldName $c={g.c}>Term</FieldName>
                    <FieldValue>{g.a}</FieldValue>
                  </FieldRow>
                  <FieldRow>
                    <FieldName $c={g.c}>Definition</FieldName>
                    <FieldValue>{g.b}</FieldValue>
                  </FieldRow>
                </div>
              ))}
            </Form>
            <VBar>
              <ChevronUp size={11} strokeWidth={3} />
              <VThumb $t={3} $h={190} />
              <Grow />
              <ChevronDown size={11} strokeWidth={3} />
            </VBar>
          </FormWrap>
        </MidPane>

        <RightPane>
          <Toolbar $pt={1}>
            <Slot><LetterA kind="bold" /></Slot>
            <Slot><LetterA kind="italic" /></Slot>
            <Slot><LetterA kind="outline" /></Slot>
            <Slot><LetterA kind="strike" /></Slot>
            <Slot><SmallA up /></Slot>
            <Slot><SmallA /></Slot>
            <Sep $l={2} $r={5} />
            <SearchBox><Magnifier />Preview-Search</SearchBox>
            <Slot><Arrow /></Slot>
            <Slot><Arrow dir="r" /></Slot>
            <Sep $l={2} />
            <Slot $w={48}><Seal /></Slot>
          </Toolbar>
          <Toolbar $pt={1}>
            <Slot><Printer /></Slot>
            <Slot $w={52}><TableIcon /></Slot>
            <Slot $w={34}><One>1</One></Slot>
            <Slot $on><Notepad /></Slot>
            <Slot $on><People /></Slot>
            <Slot><Calendar n="31" /></Slot>
            <Slot $w={50}><AbcCheck /></Slot>
            <Slot $w={50}><DocInfo /></Slot>
            <Slot $w={28}><Tools /></Slot>
          </Toolbar>
          <Preview>
            <Web>
              <Banner>
                <BannerBtn>tlTerm Terminology Software</BannerBtn>
                <BannerBtn>Evaluation - Buy Now</BannerBtn>
                <BannerBtn>Activate</BannerBtn>
              </Banner>
              <CloseBtn>X</CloseBtn>
              <LinkBar $c="#416ea8" $ls={0.05}>
                <LinkCell $icon><CamWrap><Camera /></CamWrap></LinkCell>
                {blueLinks.map((l) => (
                  <LinkCell key={l}><LinkText $b={isBold(l)}>{l}</LinkText></LinkCell>
                ))}
              </LinkBar>
              <LinkBar $c="#4a7a5e" $ls={0.13}>
                {greenLinks.map((l) => (
                  <LinkCell key={l} $h={22}><LinkText $b={isBold(l)}>{l}</LinkText></LinkCell>
                ))}
              </LinkBar>
              <SortBar>
                <SortBtn>Sort by: English::Term</SortBtn>
                <GridMark><GridIcon /></GridMark>
              </SortBar>
              <Article>
                <Heading>soft sore <HeadArrow>→</HeadArrow> <a>chancroid</a></Heading>
                {articleEntries.map((e, i) => (
                  <EntryLine key={i} e={e} />
                ))}
                <FloatBar>
                  <FloatCell $b><CamWrap $gap={3}><Camera s={15} /></CamWrap>Original:</FloatCell>
                  {blueLinks.map((l) => (
                    <FloatCell key={l}><LinkText $b={isBold(l)}>{l}</LinkText></FloatCell>
                  ))}
                  <FloatStrip />
                  <Grip viewBox="0 0 9 9">
                    <path stroke="#666" d="M1 9l8-8M4 9l5-5M7 9l2-2" />
                  </Grip>
                </FloatBar>
              </Article>
              <Below>
                {belowEntries.map((e, i) => (
                  <EntryLine key={i} e={e} />
                ))}
              </Below>
              <HBar $h={18} $pr={3}>
                <ChevronLeft size={11} strokeWidth={3} />
                <HThumb $l={1} $w={727} $th={13} />
                <Grow />
                <ChevronRight size={11} strokeWidth={3} />
              </HBar>
            </Web>
            <VBar $w={16}>
              <ChevronUp size={10} strokeWidth={3} />
              <VThumb $t={3} $h={132} />
              <Grow />
              <ChevronDown size={10} strokeWidth={3} />
              <BottomGap />
            </VBar>
            <Watermark>SOFTPEDIA</Watermark>
          </Preview>
        </RightPane>
      </Main>

      <StatusBar>
        <StatusCell>Restore last saved version of selected article</StatusCell>
        <StatusCell $w={100} />
        <StatusCell $w={329}>Words: 204</StatusCell>
      </StatusBar>

      <Menu>
        {menuItems.map((m, i) =>
          m === "-" ? (
            <MenuSep key={i} />
          ) : (
            <MenuRow key={i} $hot={m.hot} $off={m.off}>
              <MenuIcon $off={m.off}>{m.i}</MenuIcon>
              <MenuLabel>{m.t}</MenuLabel>
              {m.k}
            </MenuRow>
          )
        )}
      </Menu>
    </Window>
  );
}
